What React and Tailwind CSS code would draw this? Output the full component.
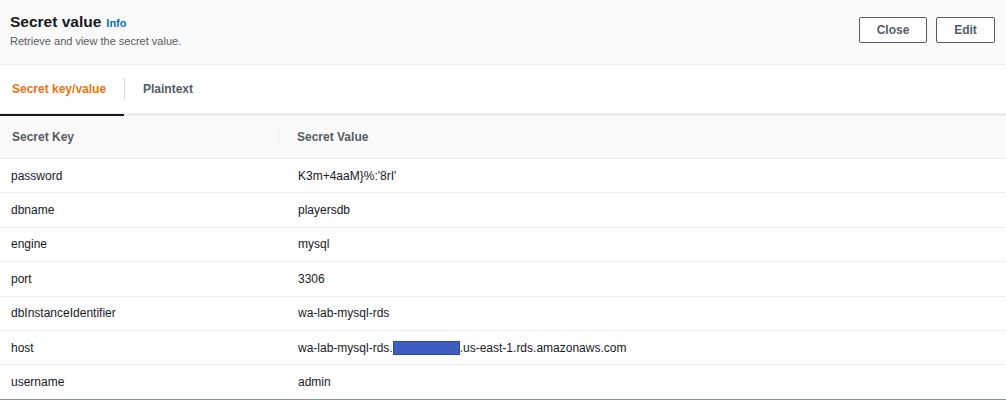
const ROWS = [
  ['password', "K3m+4aaM}%:'8rI'"],
  ['dbname', 'playersdb'],
  ['engine', 'mysql'],
  ['port', '3306'],
  ['dbInstanceIdentifier', 'wa-lab-mysql-rds'],
  ['host', null],
  ['username', 'admin'],
];

export default function App() {
  return (
    <div className="w-[1006px] h-[401px] bg-white text-[#16191f] overflow-hidden" style={{ fontFamily: '"Liberation Sans", Arial, sans-serif' }}>
      {/* Header */}
      <div className="h-[65px] bg-[#fafafa] border-b border-[#eaeded] flex items-start justify-between pl-[10px] pr-[11px]">
        <div className="pt-[12px]">
          <div className="flex items-baseline gap-[5px]">
            <h2 className="text-[15.5px] font-bold leading-[20px]">Secret value</h2>
            <span className="text-[11px] font-bold text-[#0073bb]">Info</span>
          </div>
          <p className="text-[11px] text-[#545b64] mt-[1px]">Retrieve and view the secret value.</p>
        </div>
        <div className="flex gap-[9px] pt-[17px]">
          <button className="w-[68px] h-[26px] border border-[#545b64] rounded-[2px] bg-white text-[12px] font-bold text-[#545b64]">Close</button>
          <button className="w-[59px] h-[26px] border border-[#545b64] rounded-[2px] bg-white text-[12px] font-bold text-[#545b64]">Edit</button>
        </div>
      </div>

      {/* Tabs */}
      <div className="h-[51px] flex items-stretch border-b-[3px] border-[#eaeded]">
        <div className="relative w-[124px] flex items-center pl-[12px] text-[12px] font-bold text-[#ec7211]">
          Secret key/value
          <div className="absolute left-0 right-0 -bottom-[3px] h-[2px] bg-[#16191f]" />
        </div>
        <div className="w-px bg-[#d5dbdb] my-[13px]" />
        <div className="flex items-center pl-[18px] text-[12px] font-bold text-[#545b64]">Plaintext</div>
      </div>

      {/* Table */}
      <div className="grid grid-cols-[279px_1fr] h-[43px] bg-[#fafafa] border-b border-[#eaeded] text-[12px] font-bold text-[#545b64]">
        <div className="flex items-center pl-[12px] border-r border-[#eaeded] my-[12px]">Secret Key</div>
        <div className="flex items-center pl-[18px]">Secret Value</div>
      </div>
      {ROWS.map(([k, v], i) => (
        <div key={k} className={`grid grid-cols-[279px_1fr] h-[34.4px] text-[12px] ${i === ROWS.length - 1 ? 'border-b border-[#879596]' : 'border-b border-[#eaeded]'}`}>
          <div className="flex items-center pl-[11px]">{k}</div>
          <div className="flex items-center pl-[19px]">
            {v !== null ? v : (
              <>
                wa-lab-mysql-rds.
                <span className="inline-block w-[67px] h-[14px] bg-[#3b5ec0] border border-[#2b4a9a]" />
                .us-east-1.rds.amazonaws.com
              </>
            )}
          </div>
        </div>
      ))}
    </div>
  );
}
